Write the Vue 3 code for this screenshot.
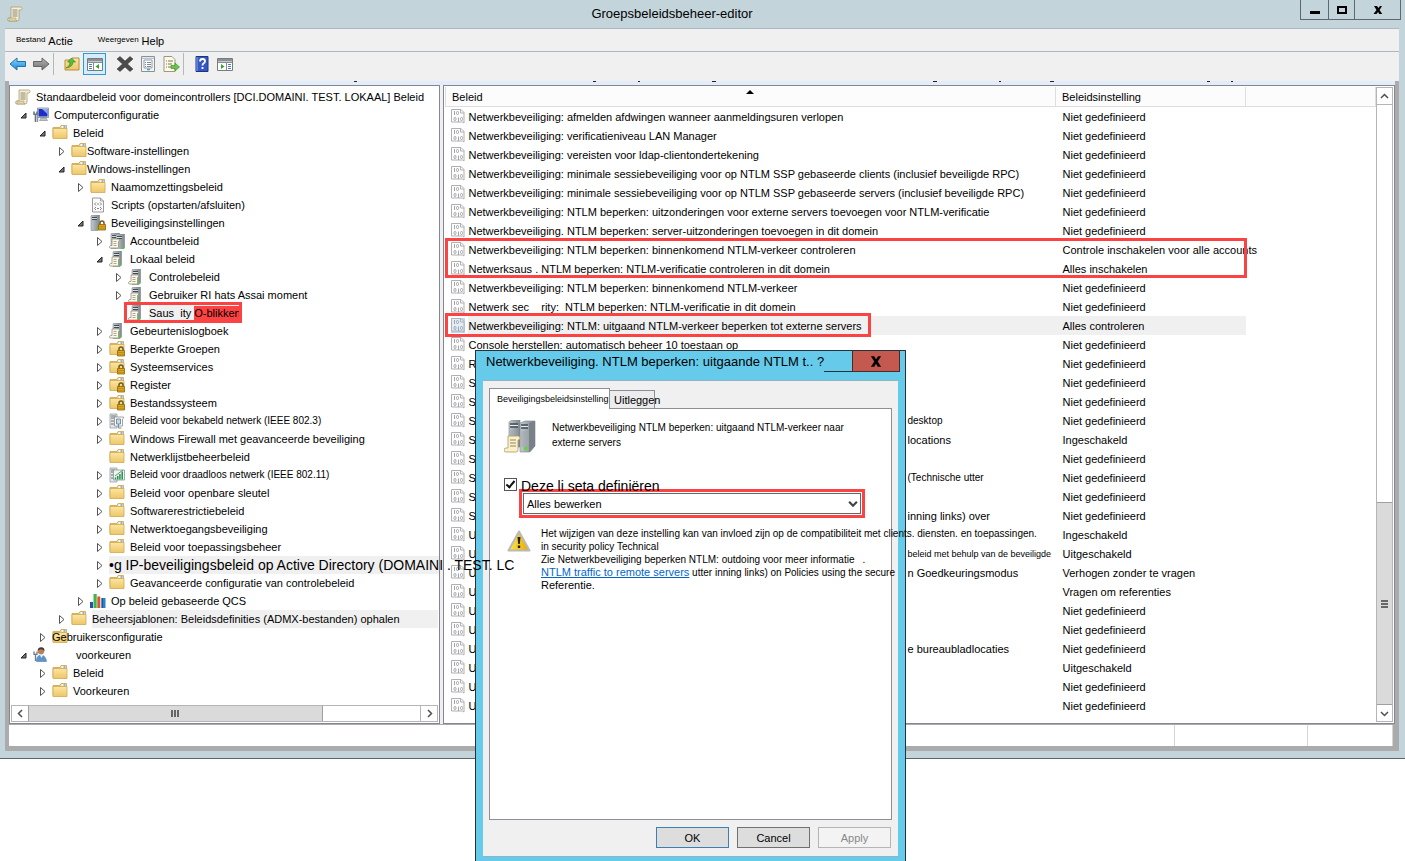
<script setup>
import { ref } from 'vue'

const tree = [
  { level: 0, icon: 'scroll', text: 'Standaardbeleid voor domeincontrollers [DCI.DOMAINI. TEST. LOKAAL] Beleid' },
  { level: 1, state: 'open', icon: 'computer', text: 'Computerconfiguratie' },
  { level: 2, state: 'open', icon: 'folder', text: 'Beleid' },
  { level: 3, state: 'closed', icon: 'folder', text: 'Software-instellingen', kind: 'tight' },
  { level: 3, state: 'open', icon: 'folder', text: 'Windows-instellingen', kind: 'tight' },
  { level: 4, state: 'closed', icon: 'folder', text: 'Naamomzettingsbeleid' },
  { level: 4, icon: 'script', text: 'Scripts (opstarten/afsluiten)' },
  { level: 4, state: 'open', icon: 'serverlock', text: 'Beveiligingsinstellingen' },
  { level: 5, state: 'closed', icon: 'servers', text: 'Accountbeleid' },
  { level: 5, state: 'open', icon: 'server', text: 'Lokaal beleid' },
  { level: 6, state: 'closed', icon: 'server', text: 'Controlebeleid' },
  { level: 6, state: 'closed', icon: 'server', text: 'Gebruiker RI hats Assai moment' },
  { level: 6, icon: 'server', text: 'Saus  ity ', mark: 'O-blikken', kind: 'selected' },
  { level: 5, state: 'closed', icon: 'server', text: 'Gebeurtenislogboek' },
  { level: 5, state: 'closed', icon: 'folderlock', text: 'Beperkte Groepen' },
  { level: 5, state: 'closed', icon: 'folderlock', text: 'Systeemservices' },
  { level: 5, state: 'closed', icon: 'folderlock', text: 'Register' },
  { level: 5, state: 'closed', icon: 'folderlock', text: 'Bestandssysteem' },
  { level: 5, state: 'closed', icon: 'wired', text: 'Beleid voor bekabeld netwerk (IEEE 802.3)', kind: 'small' },
  { level: 5, state: 'closed', icon: 'folder', text: 'Windows Firewall met geavanceerde beveiliging' },
  { level: 5, icon: 'folder', text: 'Netwerklijstbeheerbeleid' },
  { level: 5, state: 'closed', icon: 'wireless', text: 'Beleid voor draadloos netwerk (IEEE 802.11)', kind: 'small' },
  { level: 5, state: 'closed', icon: 'folder', text: 'Beleid voor openbare sleutel' },
  { level: 5, state: 'closed', icon: 'folder', text: 'Softwarerestrictiebeleid' },
  { level: 5, state: 'closed', icon: 'folder', text: 'Netwerktoegangsbeveiliging' },
  { level: 5, state: 'closed', icon: 'folder', text: 'Beleid voor toepassingsbeheer' },
  { level: 5, state: 'closed', text: '•g IP-beveiligingsbeleid op Active Directory (DOMAINI . TEST. LC', kind: 'large' },
  { level: 5, state: 'closed', icon: 'folder', text: 'Geavanceerde configuratie van controlebeleid' },
  { level: 4, state: 'closed', icon: 'chart', text: 'Op beleid gebaseerde QCS' },
  { level: 3, state: 'closed', icon: 'folder', text: 'Beheersjablonen: Beleidsdefinities (ADMX-bestanden) ophalen', kind: 'shaded' },
  { level: 2, state: 'closed', icon: 'folder', text: 'Gebruikersconfiguratie', kind: 'over' },
  { level: 1, state: 'open', icon: 'user', text: 'voorkeuren', kind: 'far' },
  { level: 2, state: 'closed', icon: 'folder', text: 'Beleid' },
  { level: 2, state: 'closed', icon: 'folder', text: 'Voorkeuren' },
]

const none = 'Niet gedefinieerd'
const policies = [
  { name: 'Netwerkbeveiliging: afmelden afdwingen wanneer aanmeldingsuren verlopen', value: none },
  { name: 'Netwerkbeveiliging: verificatieniveau LAN Manager', value: none },
  { name: 'Netwerkbeveiliging: vereisten voor ldap-clientondertekening', value: none },
  { name: 'Netwerkbeveiliging: minimale sessiebeveiliging voor op NTLM SSP gebaseerde clients (inclusief beveiligde RPC)', value: none },
  { name: 'Netwerkbeveiliging: minimale sessiebeveiliging voor op NTLM SSP gebaseerde servers (inclusief beveiligde RPC)', value: none },
  { name: 'Netwerkbeveiliging: NTLM beperken: uitzonderingen voor externe servers toevoegen voor NTLM-verificatie', value: none },
  { name: 'Netwerkbeveiliging. NTLM beperken: server-uitzonderingen toevoegen in dit domein', value: none },
  { name: 'Netwerkbeveiliging: NTLM beperken: binnenkomend NTLM-verkeer controleren', value: 'Controle inschakelen voor alle accounts' },
  { name: 'Netwerksaus . NTLM beperken: NTLM-verificatie controleren in dit domein', value: 'Alles inschakelen' },
  { name: 'Netwerkbeveiliging: NTLM beperken: binnenkomend NTLM-verkeer', value: none },
  { name: 'Netwerk sec    rity:  NTLM beperken: NTLM-verificatie in dit domein', value: none },
  { name: 'Netwerkbeveiliging: NTLM: uitgaand NTLM-verkeer beperken tot externe servers', value: 'Alles controleren', selected: true },
  { name: 'Console herstellen: automatisch beheer 10 toestaan op', value: none },
  { name: 'R', value: none },
  { name: 'Sl', value: none },
  { name: 'Sl', value: none },
  { name: 'Sy', tail: 'desktop', small: true, value: none },
  { name: 'Sy', tail: 'locations', value: 'Ingeschakeld' },
  { name: 'Sy', value: none },
  { name: 'Sy', tail: '(Technische utter', small: true, value: none },
  { name: 'Sy', value: none },
  { name: 'Sy', tail: 'inning links) over', value: none },
  { name: 'U', value: 'Ingeschakeld' },
  { name: 'U', tail: 'beleid met behulp van de beveiligde', tiny: true, value: 'Uitgeschakeld' },
  { name: 'U', tail: 'n Goedkeuringsmodus', value: 'Verhogen zonder te vragen' },
  { name: 'U', value: 'Vragen om referenties' },
  { name: 'U', value: none },
  { name: 'U', value: none },
  { name: 'U', tail: 'e bureaubladlocaties', value: none },
  { name: 'U', value: 'Uitgeschakeld' },
  { name: 'U', value: none },
  { name: 'U', value: none },
]

const defined = ref(true)
const indent = (level) => ({ paddingLeft: (level === 0 ? 5 : 8 + (level - 1) * 19) + 'px' })
</script>

<template>
  <div class="screen">
    <svg class="defs" aria-hidden="true">
      <defs>
        <linearGradient id="gFolder" x1="0" y1="0" x2="0" y2="1"><stop offset="0" stop-color="#fbe6a3" /><stop offset="1" stop-color="#eec668" /></linearGradient>
        <linearGradient id="gSteel" x1="0" y1="0" x2="1" y2="0"><stop offset="0" stop-color="#c3cace" /><stop offset="1" stop-color="#7d878d" /></linearGradient>
        <linearGradient id="gBlue" x1="0" y1="0" x2="0" y2="1"><stop offset="0" stop-color="#8fd6fb" /><stop offset="1" stop-color="#1585d8" /></linearGradient>
        <linearGradient id="gGray" x1="0" y1="0" x2="0" y2="1"><stop offset="0" stop-color="#b5b5b5" /><stop offset="1" stop-color="#6f6f6f" /></linearGradient>
        <linearGradient id="gWarn" x1="0" y1="0" x2="1" y2="0"><stop offset="0" stop-color="#ffe94a" /><stop offset="1" stop-color="#e8a700" /></linearGradient>
        <symbol id="scroll" viewBox="0 0 16 16">
          <path d="M4 1h9.500q1.500 0 1.500 1.500T13.500 4H12v9q0 2-2 2H2q-1.500 0-1.500-1.500T2 12h2z" fill="#f8efcf" stroke="#a59a78" stroke-width=".8" />
          <path d="M2 12h7v2q0 1 1 1H2z" fill="#e2d3a2" stroke="#a59a78" stroke-width=".6" />
          <path d="M5.500 4h5M5.500 6h5M5.500 8h5M5.500 10h5" stroke="#807c74" stroke-width=".9" />
        </symbol>
        <symbol id="folder" viewBox="0 0 16 16">
          <path d="M1 2.500h7l1-2h5.500v12H1z" fill="#f0d384" stroke="#cda24a" stroke-width=".8" />
          <path d="M1 3.500h14v10H1z" fill="url(#gFolder)" stroke="#d0a850" stroke-width=".8" />
          <path d="M9.500 2h4.500" stroke="#fff" stroke-width="1.600" /><path d="M11.500 2h2" stroke="#4a9be0" stroke-width="1.400" />
        </symbol>
        <symbol id="lock" viewBox="0 0 16 16">
          <path d="M10 10V8q0-2 2-2t2 2v2" fill="none" stroke="#6f5a20" stroke-width="1.500" />
          <path d="M8.500 9.500h7V15h-7z" fill="#e0a81f" stroke="#8a650c" stroke-width=".8" /><path d="M9 11.500h6M9 13.300h6" stroke="#a97c12" stroke-width=".6" />
        </symbol>
        <symbol id="folderlock" viewBox="0 0 16 16"><use href="#folder" /><use href="#lock" /></symbol>
        <symbol id="script" viewBox="0 0 16 16">
          <path d="M2.500 1h8L13.500 4v11h-11z" fill="#fafafa" stroke="#8f8f8f" stroke-width=".9" /><path d="M10.500 1v3h3" fill="none" stroke="#8f8f8f" stroke-width=".8" />
          <path d="M6 5.500 4.500 7 6 8.500M10 5.500 11.500 7 10 8.500M7 7h2M6 10l-1.500 1.500L6 13m4-3 1.500 1.500L10 13m-3-1.500h2" fill="none" stroke="#777" stroke-width=".9" />
        </symbol>
        <symbol id="tower" viewBox="0 0 16 16">
          <path d="M6 1l1-1h7.500v14L13 15.500H6z" fill="url(#gSteel)" stroke="#737b80" stroke-width=".5" />
          <path d="M7 2.500h5M7 4.500h5" stroke="#3f4b52" /><path d="M7 3.500h5" stroke="#eef2f4" stroke-width=".7" /><path d="M12 12.500h2v2h-2z" fill="#45d02c" />
        </symbol>
        <symbol id="page" viewBox="0 0 16 16">
          <path d="M3 6h6.500q1 0 1 1t-1 1.500V14q0 1-1 1H1.500q-1 0-1-1t1-1.500H3z" fill="#fbf8ea" stroke="#978f7a" stroke-width=".8" /><path d="M4.500 8.500h3M4.500 10.500h3M4.500 12.500h3" stroke="#8b8471" stroke-width=".7" />
        </symbol>
        <symbol id="server" viewBox="0 0 16 16"><use href="#tower" x="-2" /><use href="#page" /></symbol>
        <symbol id="servers" viewBox="0 0 16 16"><use href="#tower" x="-4" /><use href="#tower" x="1" y="1" /><use href="#page" /></symbol>
        <symbol id="serverlock" viewBox="0 0 16 16"><use href="#tower" x="-5" /><use href="#lock" /></symbol>
        <symbol id="wired" viewBox="0 0 16 16">
          <path d="M1 1h7v14H1z" fill="#e4e8ea" stroke="#8a9398" stroke-width=".7" /><path d="M2 3h5M2 5h3M2 8h3M2 11h3" stroke="#59656c" stroke-width=".9" />
          <path d="M5.500 4h9q1 1-1 2v7H5.500z" fill="#fff" stroke="#858c90" stroke-width=".8" /><path d="M7.500 6h4v5h-4z" fill="#ccd7e0" stroke="#5f7890" stroke-width=".8" /><path d="M9.500 11v4h3" fill="none" stroke="#6d8cab" />
        </symbol>
        <symbol id="wireless" viewBox="0 0 16 16">
          <path d="M1 1h7v14H1z" fill="#e4e8ea" stroke="#8a9398" stroke-width=".7" /><path d="M2 3h4M2 5h3M2 8h3M2 11h3" stroke="#59656c" stroke-width=".9" />
          <path d="M4.500 3h11v10h-11z" fill="#eef4ee" stroke="#8d9b90" stroke-width=".8" /><path d="M6.500 12.500v-2M8.700 12.500V9M10.900 12.500V7M13.200 12.500V4.500" stroke="#219150" stroke-width="1.500" /><path d="M6 9l4-3 4-3" stroke="#3b7f5b" stroke-width=".8" fill="none" />
        </symbol>
        <symbol id="chart" viewBox="0 0 16 16">
          <path d="M0 9h3v6H0z" fill="#274fb0" /><path d="M3.500 1h3.200v14H3.500z" fill="#3fb54d" /><path d="M7.300 3.500h3v11.500h-3z" fill="#d9582c" /><path d="M11.300 5h4.200v10h-4.200z" fill="#2b83cf" /><path d="M12.300 5v10" stroke="#1c4c8c" />
        </symbol>
        <symbol id="computer" viewBox="0 0 16 16">
          <path d="M4.500 1h11v9.500h-11z" fill="#d9dde0" stroke="#858b90" stroke-width=".8" /><path d="M5.500 2h9v7.500h-9z" fill="#1d2fc4" /><path d="M9 2h5.500v5z" fill="#8ba8f8" /><path d="M8 11h5l1.500 2.500h-8z" fill="#c3c8cb" stroke="#7d8388" stroke-width=".6" />
          <path d="M1 4.500v2.800h3V4.500M2.500 7v8" fill="none" stroke="#667680" stroke-width="1.600" /><path d="M4.500 8v7" stroke="#8c969c" stroke-width="1.400" />
        </symbol>
        <symbol id="user" viewBox="0 0 16 16">
          <circle cx="8" cy="4" r="3.300" fill="#b98060" /><path d="M4.700 4q0-3.800 3.500-3.800T11.500 4q-1.500-1.700-3.500-1.700T4.700 4z" fill="#443730" /><path d="M3.500 14.500q0-6.500 4.500-6.500t5.500 6.500z" fill="#5c93cb" stroke="#4f7fae" stroke-width=".6" /><path d="M7 8l1.500 3L10 8z" fill="#eef5fb" />
          <path d="M1 4.500v2.800h3V4.500M2.500 7v7" fill="none" stroke="#6d7a82" stroke-width="1.300" />
        </symbol>
        <symbol id="policy" viewBox="0 0 14 15">
          <path d="M.5.500h9.500l3 3v10.500l-1.500-1H.5z" fill="#fcfcfc" fill-opacity=".6" stroke="#b0b0b0" /><path d="M9.500 1v3H13" fill="none" stroke="#b0b0b0" />
          <g fill="none" stroke="#a2a2ac"><path d="M3.500 2v4M7.500 8.500V13" /><rect x="5.500" y="2.500" width="2" height="3" rx="1" /><rect x="3" y="8.500" width="2" height="3" rx="1" /><rect x="9.500" y="8.500" width="2" height="3" rx="1" /></g>
        </symbol>
        <symbol id="arrow" viewBox="0 0 18 16"><path d="M1 8l7-6v3.500h8.500v5H8V14z" /></symbol>
      </defs>
    </svg>

    <main class="window">
      <header class="titlebar">
        <svg class="app-icon"><use href="#scroll" /></svg>
        <h1>Groepsbeleidsbeheer-editor</h1>
        <div class="controls">
          <button class="first" aria-label="Minimaliseren"><svg viewBox="0 0 12 12"><path d="M1 7h10v3H1z" /></svg></button>
          <button aria-label="Maximaliseren"><svg viewBox="0 0 12 12"><path d="M2 3h8v6H2z" fill="none" stroke="#000" stroke-width="2" /></svg></button>
          <button class="wide" aria-label="Sluiten"><svg viewBox="0 0 12 12"><path d="M2 2h3l1.500 2L8 2h2L7.600 6l2.600 4H7.300L6 8l-1.500 2h-3l3-4z" /></svg></button>
        </div>
      </header>

      <div class="client">
        <nav class="menubar">
          <button class="tiny">Bestand</button>
          <button>Actie</button>
          <button class="tiny view">Weergeven</button>
          <button>Help</button>
        </nav>

        <div class="toolbar">
          <button aria-label="Terug"><svg viewBox="0 0 18 16"><use href="#arrow" fill="url(#gBlue)" stroke="#2171ad" /></svg></button>
          <button aria-label="Vooruit"><svg viewBox="0 0 18 16"><g transform="translate(18) scale(-1 1)"><use href="#arrow" fill="url(#gGray)" stroke="#666" /></g></svg></button>
          <i class="sep"></i>
          <button aria-label="Omhoog"><svg viewBox="0 0 18 16"><path d="M2 4h6l1-2h7v12H2z" fill="url(#gFolder)" stroke="#b98f3a" /><path d="M3 12q4-1 4-6H4.500L8.500 2l4 4H10q0 5-7 6z" fill="#5bbd3a" stroke="#2d7d1b" stroke-width=".6" /></svg></button>
          <button class="on" aria-label="Structuur"><svg viewBox="0 0 18 16"><path d="M1.500 2.500h15v12h-15z" fill="#fff" stroke="#777b80" /><path d="M2 3h14v2.500H2z" fill="#8a9096" /><path d="M2 6.500h14M7.500 7v7" stroke="#888d92" /><path d="M3 8.500h3M3 10.500h3M3 12.500h3" stroke="#4e7db2" /><path d="M13 8v5l-3.500-2.500z" fill="#36a52b" /></svg></button>
          <button aria-label="Verwijderen"><svg viewBox="0 0 18 16"><path d="M1 3l3-2.500 5 4.500 5-4.500L17 3l-5.500 5 5.500 5-3 2.500-5-4.500-5 4.500L1 13l5.500-5z" fill="#4b4b4b" stroke="#333" stroke-width=".5" /></svg></button>
          <button aria-label="Eigenschappen"><svg viewBox="0 0 18 16"><path d="M2.500.5h13v15h-13z" fill="#f3f4f5" stroke="#8b9095" /><path d="M5 4h8v8H5z" fill="#fff" stroke="#9aa0a5" /><path d="M3 2.300h12" stroke="#9ebadb" /><path d="M6 6.500h1m1 0h4M6 8.500h1m1 0h4M6 10.500h1m1 0h4" stroke="#6f7c88" stroke-width=".9" /><path d="M8 13.500h3" stroke="#35a8d8" stroke-width="1.500" /></svg></button>
          <button aria-label="Exporteren"><svg viewBox="0 0 18 16"><path d="M2 .5h8l3 3v12H2z" fill="#fdf9e4" stroke="#9c9885" /><path d="M4 5h1m1 0h5M4 8h1m1 0h4M4 11h1m1 0h4" stroke="#77756a" /><path d="M9 9.500h4V7l4.500 4L13 15v-2.500H9z" fill="#6ac544" stroke="#36882a" stroke-width=".6" /></svg></button>
          <i class="sep"></i>
          <button aria-label="Help openen"><svg viewBox="0 0 18 16"><path d="M3 .5h12v15H3z" fill="#3558c4" stroke="#1c3480" /><path d="M4 1v14" stroke="#8ba4ec" /><path d="M7 5.500q0-2.500 2.500-2.500T12 5.300q0 1.200-1.300 2-1.200.7-1.200 2.200M9.500 11v2" fill="none" stroke="#fff" stroke-width="1.800" /></svg></button>
          <button aria-label="Deelvenster"><svg viewBox="0 0 18 16"><path d="M1.500 2.500h15v12h-15z" fill="#fff" stroke="#777b80" /><path d="M2 3h14v2.500H2z" fill="#8a9096" /><path d="M2 6.500h14M10.500 7v7" stroke="#888d92" /><path d="M12 8.500h3M12 10.500h3M12 12.500h3" stroke="#4e7db2" /><path d="M5 8v5l3.500-2.500z" fill="#36a52b" /></svg></button>
        </div>

        <div class="workspace">
          <svg class="specks" aria-hidden="true"><path d="M345 .5h3M584 .5h3M629 .5h2M703 .5h4M924 .5h4M990 .5h2M1041 .5h4M1198 .5h3M1222 .5h2" stroke="#222" /></svg>
          <section class="tree-pane">
            <ul class="tree">
              <li v-for="(n, i) in tree" :key="i" :class="n.kind" :style="indent(n.level)">
                <span v-if="n.level" class="twist">
                  <button v-if="n.state" :aria-label="n.text">
                    <svg v-if="n.state === 'closed'" viewBox="0 0 9 9"><path d="M2.500.5v8l4.500-4z" fill="#fff" stroke="#555" /></svg>
                    <svg v-else viewBox="0 0 9 9"><path d="M7 2v5H2z" fill="#777" stroke="#222" /></svg>
                  </button>
                </span>
                <svg v-if="n.icon" class="node-icon"><use :href="'#' + n.icon" /></svg>
                <span class="label">{{ n.text }}<mark v-if="n.mark">{{ n.mark }}</mark></span>
              </li>
            </ul>
            <div class="hscroll">
              <button aria-label="Links"><svg viewBox="0 0 9 9"><path d="M6 1 2.500 4.500 6 8" /></svg></button>
              <div class="hthumb"><i></i><i></i><i></i></div>
              <div class="htrack"></div>
              <button aria-label="Rechts"><svg viewBox="0 0 9 9"><path d="M3 1l3.500 3.500L3 8" /></svg></button>
            </div>
          </section>

          <section class="list-pane">
            <div class="list">
              <table>
                <colgroup><col /><col class="c-value" /><col class="c-rest" /></colgroup>
                <thead>
                  <tr><th>Beleid<i class="sort"></i></th><th>Beleidsinstelling</th><th></th></tr>
                </thead>
                <tbody>
                  <tr v-for="(p, i) in policies" :key="i" :class="{ selected: p.selected }">
                    <td>
                      <div class="cell">
                        <svg class="policy-icon"><use href="#policy" /></svg>
                        <span :class="{ lead: p.tail }">{{ p.name }}</span>
                        <span v-if="p.tail" :class="{ small: p.small, tiny: p.tiny }">{{ p.tail }}</span>
                      </div>
                    </td>
                    <td class="value">{{ p.value }}</td>
                    <td></td>
                  </tr>
                </tbody>
              </table>
              <div class="frame pair"></div>
              <div class="frame single"></div>
            </div>
            <div class="vscroll">
              <button aria-label="Omhoog"><svg viewBox="0 0 9 9"><path d="M1 6l3.500-3.500L8 6" /></svg></button>
              <div class="vtrack"></div>
              <div class="vthumb"><i></i><i></i><i></i></div>
              <button aria-label="Omlaag"><svg viewBox="0 0 9 9"><path d="M1 3l3.500 3.500L8 3" /></svg></button>
            </div>
          </section>
        </div>
        <footer class="statusbar"><span></span><span class="s1"></span><span class="s2"></span></footer>
      </div>
    </main>

    <section class="dialog" role="dialog" aria-labelledby="dlg-title">
      <header class="dlg-title">
        <h2 id="dlg-title">Netwerkbeveiliging. NTLM beperken: uitgaande NTLM t.. ?</h2>
        <i class="help-edge"></i>
        <button aria-label="Venster sluiten"><svg viewBox="0 0 14 12"><path d="M1 0h4l2 3.500L9.500 0H13L9 6l4 6H9L7 8.500 5 12H1l4-6z" /></svg></button>
      </header>
      <div class="dlg-body">
        <div class="tabs">
          <button class="tab active">Beveiligingsbeleidsinstelling</button>
          <button class="tab">Uitleggen</button>
        </div>
        <div class="panel">
          <div class="intro">
            <svg viewBox="0 0 32 34">
              <path d="M5 2l3-2h8v27H5z" fill="url(#gSteel)" stroke="#7e888e" stroke-width=".6" /><path d="M16 3l5-2h10v25l-5 6H16z" fill="url(#gSteel)" stroke="#7e888e" stroke-width=".6" />
              <path d="M25 3l6-2v25l-6 6z" fill="#788187" /><path d="M6 4h8M6 7h8M17 5h7M17 8h7" stroke="#424e55" stroke-width="1.300" /><path d="M6 5.500h8M17 6.500h7" stroke="#e6ebee" />
              <path d="M7 10v14M9 10v14M11 10v14M13 10v14M18 11v16M20 11v16M22 11v16" stroke="#98a1a6" stroke-width=".7" /><path d="M20 27h3v3h-3z" fill="#60da27" />
              <path d="M4 16h10q2 0 2 2t-2 2v10q0 2-2 2H2q-2 0-2-2t2-2h2z" fill="#fbf0c6" stroke="#aa9a6a" stroke-width=".8" /><path d="M6 20h6M6 23h6M6 26h6" stroke="#90866a" />
            </svg>
            <p>Netwerkbeveiliging NTLM beperken: uitgaand NTLM-verkeer naar<br />externe servers</p>
          </div>
          <label class="define"><input v-model="defined" type="checkbox" /><span>Deze li seta definiëren</span></label>
          <div class="choice">
            <select aria-label="Beleidsinstelling"><option>Alles bewerken</option></select>
            <svg viewBox="0 0 9 9"><path d="M1 2.500 4.500 6 8 2.500" /></svg>
          </div>
          <div class="warning">
            <svg viewBox="0 0 24 22"><path d="M12 1.500 22.500 20.500h-21z" fill="url(#gWarn)" stroke="#b9b9b9" stroke-width="2" stroke-linejoin="round" /><path d="M10.500 7h3l-.7 7h-1.600zM10.800 15.500h2.400V18h-2.400z" fill="#222" /></svg>
            <div class="advice">
              <p>Het wijzigen van deze instelling kan van invloed zijn op de compatibiliteit met clients. diensten. en toepassingen.</p>
              <p>in security policy Technical</p>
              <p>Zie Netwerkbeveiliging beperken NTLM: outdoing voor meer informatie<span class="stop">.</span></p>
              <p><a href="#">NTLM traffic to remote servers</a> utter inning links) on Policies using the secure</p>
              <p class="ref">Referentie.</p>
            </div>
          </div>
        </div>
        <div class="actions">
          <button class="default">OK</button><button>Cancel</button><button disabled>Apply</button>
        </div>
      </div>
    </section>
  </div>
</template>

<style>
body { margin: 0; background: #fff; }
</style>

<style scoped>
*, *::after { box-sizing: border-box; }
.screen { position: relative; min-height: 100vh; overflow: hidden; font: 11px/18px "Liberation Sans", Arial, sans-serif; color: #000; background: #fff; }
.defs { position: absolute; width: 0; height: 0; }
button { font: inherit; color: inherit; padding: 0; margin: 0; border: 0; background: none; }
h1, h2, p, ul { margin: 0; padding: 0; font-weight: 400; }
.window { background: #c3d5db; border-bottom: 1px solid #5c6268; padding: 0 6px 7px 5px; }
.titlebar { display: flex; height: 28px; justify-content: flex-end; position: relative; }
.app-icon { position: absolute; left: 2px; top: 6px; width: 16px; height: 16px; }
h1 { flex: 1; text-align: center; font-size: 13px; line-height: 27px; padding-left: 39px; }
.controls { display: flex; align-items: flex-start; margin-right: -2px; }
.controls button { width: 26px; height: 20px; border: 1px solid #5f686f; border-top: 0; border-right: 0; display: grid; place-items: center; }
.controls button.first { width: 28px; }
.controls button.wide { width: 47px; border-right: 1px solid #5f686f; }
.controls svg { width: 12px; height: 12px; }
.client { border-top: 1px solid #aeb7bf; background: #f0f0f0; }
.menubar { display: flex; height: 23px; border-bottom: 1px solid #aeb7bf; padding-left: 11px; gap: 3px; }
.menubar button { line-height: 24px; }
.menubar .tiny { font-size: 8px; line-height: 18px; }
.menubar .view { margin-left: 22px; }
.toolbar { display: flex; height: 29px; padding: 0 0 5px 1px; align-items: center; }
.toolbar button { width: 23px; height: 22px; display: grid; place-items: center; }
.toolbar button.on { border: 1px solid #2e9bd8; background: #d5ecfa; margin-right: 7px; }
.toolbar svg { width: 18px; height: 16px; }
.sep { width: 1px; height: 22px; background: #b3b8bc; margin: 0 6px 0 1px; }
.workspace { position: relative; display: flex; gap: 3px; border: solid #ababab; border-width: 0 4px; background: #f0f0f0; box-shadow: inset 0 4px #e4ecfb; padding-top: 4px; }
.specks { position: absolute; left: 0; top: 0; width: 100%; height: 2px; }
.tree-pane { flex: 0 0 431px; border: 1px solid #828790; background: #fff; display: flex; flex-direction: column; justify-content: space-between; padding: 2px 1px 1px 0; min-width: 0; }
.tree { list-style: none; }
.tree li { display: flex; height: 18px; align-items: center; white-space: pre; }
.twist { flex: 0 0 15px; height: 18px; display: grid; align-items: center; }
.twist button { display: grid; width: 11px; height: 12px; place-items: center; }
.twist svg { width: 9px; height: 9px; }
.node-icon { flex: 0 0 16px; height: 16px; margin-right: 5px; }
.tight .node-icon { margin-right: 0; }
.small { font-size: 10px; }
.tiny { font-size: 9px; }
.large .label { font-size: 14px; background: #f0f0f0; position: relative; z-index: 5; width: 330px; }
.shaded .label { background: #f0f0f0; flex: 1; }
.over .node-icon { margin-right: -16px; }
.over .label { position: relative; }
.far .label { padding-left: 22px; }
.selected .label { background: #f0f0f0; }
.tree .selected { position: relative; }
.tree .selected::after { content: ""; position: absolute; left: 114px; top: -2px; width: 118px; height: 21px; border: 3px solid #fb4343; }
mark { background: #fb4343; color: inherit; padding: 1px 0; }
.hscroll { display: flex; height: 17px; border: 1px solid #b5b5b5; margin: 5px 0 0 1px; }
.hscroll button { width: 16px; display: grid; place-items: center; }
.hscroll svg, .vscroll svg { width: 9px; height: 9px; fill: none; stroke: #505050; stroke-width: 1.500; }
.hthumb { flex: 295; background: #dadada; border: solid #a0a0a0; border-width: 0 1px; display: flex; gap: 1px; align-items: center; justify-content: center; }
.hthumb i { width: 2px; height: 7px; background: #666; }
.htrack { flex: 98; border-right: 1px solid #b5b5b5; }
.list-pane { flex: 1; border: 1px solid #828790; background: #fff; display: flex; padding: 1px; min-width: 0; }
.list { flex: 1; position: relative; min-width: 0; }
table { width: 100%; border-collapse: collapse; table-layout: fixed; }
.c-value { width: 190px; } .c-rest { width: 130px; }
th { height: 19px; padding: 2px 0 0 6px; border: 1px solid #dedede; border-top: 0; text-align: left; font-weight: 400; background: #fcfcfc; line-height: 17px; position: relative; }
.sort { position: absolute; left: calc(50% - 5px); top: 3px; border: 4px solid transparent; border-top: 0; border-bottom-color: #000; }
td { height: 19px; padding: 0; line-height: 18px; white-space: pre; }
td.value { padding-left: 7px; }
.cell { display: flex; align-items: center; height: 19px; padding-left: 5px; }
.policy-icon { flex: 0 0 14px; height: 15px; margin-right: 4px; }
.lead { flex: 0 0 439px; }
tr.selected td:nth-child(1) { background: linear-gradient(90deg, #fff 22px, #f0f0f0 22px); }
tr.selected td:nth-child(2) { background: #f0f0f0; }
tr.selected .policy-icon { background: #b9d9f5; }
.frame { position: absolute; border: 3px solid #fb4343; }
.pair { left: 0; right: 129px; top: 151px; height: 40px; }
.single { left: 0; width: 426px; top: 226px; height: 24px; }
.vscroll { flex: 0 0 17px; display: flex; flex-direction: column; border: 1px solid #b5b5b5; }
.vscroll button { height: 16px; display: grid; place-items: center; }
.vtrack { flex: 400; border-top: 1px solid #b5b5b5; }
.vthumb { flex: 202; background: #dadada; border: solid #a0a0a0; border-width: 1px 0; display: flex; flex-direction: column; gap: 1px; align-items: center; justify-content: center; }
.vthumb i { width: 7px; height: 2px; background: #666; }
.statusbar { display: flex; height: 27px; border: solid #ababab; border-width: 1px 6px 5px 4px; background: #fff; }
.statusbar span { flex: 1; border-right: 1px solid #d5d5d5; }
.statusbar .s1 { flex: 0 0 133px; } .statusbar .s2 { flex: 0 0 85px; }

.dialog { position: absolute; left: 475px; top: 350px; width: 431px; height: 516px; background: #66cbea; border: 1px solid #26323a; padding: 0 7px; }
.dlg-title { display: flex; height: 29px; justify-content: flex-end; margin-right: -2px; }
h2 { flex: 1; font-size: 13px; line-height: 21px; padding-left: 3px; white-space: nowrap; }
.help-edge { width: 28px; height: 21px; border-bottom: 1px solid #26323a; }
.dlg-title button { width: 48px; height: 21px; background: #c4594f; border: 1px solid #4b2a28; border-top: 0; display: grid; place-items: center; }
.dlg-title svg { width: 12px; height: 11px; }
.dlg-body { background: #f0f0f0; border-top: 1px solid #8fb4c4; border-bottom: 1px solid #8fb4c4; height: 477px; padding: 7px 6px 0; display: flex; flex-direction: column; }
.tabs { display: flex; align-items: flex-end; height: 20px; }
.tab { border: 1px solid #8c8f98; border-bottom: 0; height: 18px; width: 45px; padding-left: 4px; text-align: left; border-left: 0; background: #ececec; white-space: nowrap; }
.tab.active { width: 121px; height: 21px; border-left: 1px solid #8c8f98; background: #fff; font-size: 9px; padding-left: 7px; margin-bottom: -1px; position: relative; }
.panel { height: 412px; border: 1px solid #8c8f98; background: #fff; }
.intro { display: flex; gap: 16px; padding: 11px 0 0 14px; font-size: 10px; line-height: 15px; white-space: nowrap; }
.intro svg { width: 32px; height: 34px; }
.define { display: flex; align-items: center; gap: 4px; margin: 21px 0 0 14px; height: 18px; font-size: 14px; }
.define span { padding-top: 4px; }
.define input { appearance: none; width: 13px; height: 13px; margin: 0; border: 1px solid #555; background: #fff; position: relative; }
.define input:checked::after { content: ""; position: absolute; left: 3px; top: 0; width: 5px; height: 9px; border: solid #111; border-width: 0 2px 2px 0; transform: rotate(40deg); }
.choice { margin: -4px 26px 0 29px; border: 3px solid #fb4343; padding: 1px; display: grid; }
.choice > * { grid-area: 1 / 1; }
.choice select { appearance: none; width: 100%; height: 21px; border: 1px solid #666; background: #fff; font: inherit; color: inherit; padding: 0 3px; border-radius: 0; }
.choice svg { place-self: center end; margin-right: 3px; width: 10px; height: 10px; fill: none; stroke: #444; stroke-width: 2; pointer-events: none; }
.warning { display: flex; gap: 10px; padding: 9px 0 0 17px; font-size: 10px; line-height: 13px; white-space: nowrap; }
.warning svg { flex: 0 0 24px; height: 22px; margin-top: 3px; }
.stop { margin-left: 8px; }
.advice a { font-size: 11px; color: #0066cc; }
.advice .ref { font-size: 11px; }
.actions { display: flex; justify-content: flex-end; gap: 8px; padding: 7px 1px 0 0; }
.actions button { width: 73px; height: 21px; border: 1px solid #707070; background: #ddd; }
.actions .default { border-color: #3c7fb1; }
.actions button:disabled { border-color: #b5b5b5; background: #f3f3f3; color: #888; }
</style>
